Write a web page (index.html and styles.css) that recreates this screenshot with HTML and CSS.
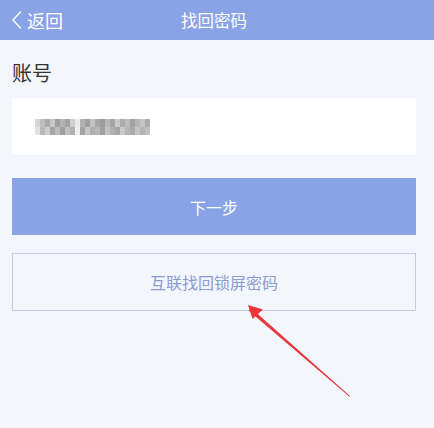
FILE: index.html
```html
<!DOCTYPE html>
<html lang="zh">
<head>
<meta charset="utf-8">
<link rel="stylesheet" href="styles.css">
</head>
<body>
<div class="page">
  <header class="topbar">
    <div class="back">
      <svg class="chev" width="12" height="20" viewBox="0 0 12 20"><path d="M10 1.5 L2 10 L10 18.5" fill="none" stroke="#fff" stroke-width="1.4"/></svg>
      <span>返回</span>
    </div>
    <div class="title">找回密码</div>
  </header>
  <main class="content">
    <div class="label">账号</div>
    <div class="field">
      <div class="mosaic" aria-label="账号（已打码）">
        <span style="background:#d6d6d6"></span><span style="background:#bdbdbd"></span><span style="background:#a9a9a9"></span><span style="background:#c7c7c7"></span><span style="background:#9e9e9e"></span><span style="background:#b4b4b4"></span><span style="background:#a3a3a3"></span><span style="background:#cfcfcf"></span><span style="background:#eaeaea"></span><span style="background:#b0b0b0"></span><span style="background:#a0a0a0"></span><span style="background:#c3c3c3"></span><span style="background:#a8a8a8"></span><span style="background:#9c9c9c"></span><span style="background:#b8b8b8"></span><span style="background:#a5a5a5"></span><span style="background:#c9c9c9"></span><span style="background:#adadad"></span><span style="background:#bbbbbb"></span><span style="background:#a2a2a2"></span><span style="background:#b6b6b6"></span><span style="background:#c4c4c4"></span><span style="background:#acacac"></span>
        <span style="background:#e2e2e2"></span><span style="background:#b9b9b9"></span><span style="background:#cdcdcd"></span><span style="background:#a6a6a6"></span><span style="background:#bcbcbc"></span><span style="background:#9f9f9f"></span><span style="background:#c0c0c0"></span><span style="background:#b2b2b2"></span><span style="background:#eeeeee"></span><span style="background:#a4a4a4"></span><span style="background:#c6c6c6"></span><span style="background:#aeaeae"></span><span style="background:#b7b7b7"></span><span style="background:#a1a1a1"></span><span style="background:#c2c2c2"></span><span style="background:#b1b1b1"></span><span style="background:#a7a7a7"></span><span style="background:#cacaca"></span><span style="background:#b5b5b5"></span><span style="background:#a9a9a9"></span><span style="background:#c5c5c5"></span><span style="background:#b3b3b3"></span><span style="background:#bfbfbf"></span>
      </div>
    </div>
    <button class="btn primary">下一步</button>
    <button class="btn outline">互联找回锁屏密码</button>
  </main>
  <svg class="arrow" width="434" height="428" viewBox="0 0 434 428">
    <polygon points="251,308 350,396 349.5,396.8 248.5,310.5" fill="#e8383d"/>
    <polygon points="248,305 263,309.5 252.5,319" fill="#e8383d"/>
  </svg>
</div>
</body>
</html>
```
FILE: styles.css
```css
* { box-sizing: border-box; }
html, body { margin: 0; padding: 0; }
body {
  background: #f3f6fd;
  font-family: "Noto Sans CJK SC", "Noto Sans", sans-serif;
  width: 434px;
  height: 428px;
  overflow: hidden;
}
.page { position: relative; width: 434px; height: 428px; }
.topbar {
  height: 40px;
  background: #8aa2e6;
  display: flex;
  align-items: center;
  position: relative;
  color: #fff;
}
.back {
  display: flex;
  align-items: center;
  padding-left: 11px;
  font-size: 18px;
  gap: 4px;
}
.chev { display: block; }
.title {
  position: absolute;
  left: 0; right: 0;
  text-align: center;
  font-size: 16.5px;
  padding-right: 6px;
  top: 9px;
  line-height: 22px;
}
.content {
  padding: 0 18px 0 12px;
  display: flex;
  flex-direction: column;
}
.label {
  margin-top: 20px;
  font-size: 20px;
  line-height: 26px;
  color: #333;
}
.field {
  margin-top: 12px;
  height: 57px;
  background: #fff;
  display: flex;
  align-items: center;
  padding-left: 23px;
}
.mosaic {
  display: grid;
  grid-template-columns: repeat(23, 5px);
  grid-auto-rows: 8px;
  margin-top: 1px;
}
.mosaic span { display: block; }
.btn {
  font-family: inherit;
  height: 57px;
  width: 100%;
  font-size: 16px;
  border: none;
  margin: 0;
  padding: 0;
}
.primary {
  margin-top: 23px;
  background: #8aa2e6;
  color: #fff;
}
.outline {
  margin-top: 18px;
  height: 58px;
  background: transparent;
  border: 1px solid #c9cde0;
  color: #8b9bcf;
}
.arrow { position: absolute; left: 0; top: 0; pointer-events: none; }
```
